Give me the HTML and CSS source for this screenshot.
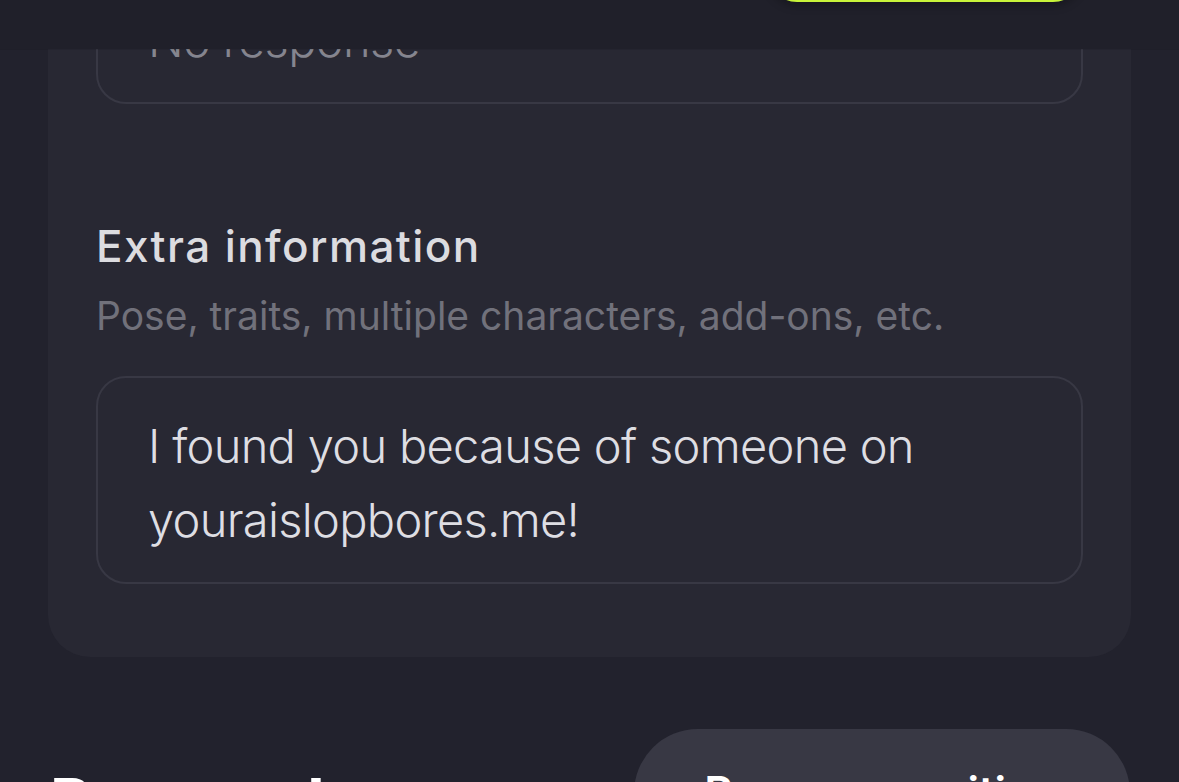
FILE: index.html
```html
<!DOCTYPE html>
<html lang="en">
<head>
<meta charset="utf-8">
<title>Commission request</title>
<link rel="stylesheet" href="styles.css">
</head>
<body>
<header class="topbar">
  <div class="topbar-pill"></div>
</header>
<main class="page">
  <section class="card">
    <div class="field">
      <div class="field-box field-box--empty">No response</div>
    </div>
    <div class="field field--labeled">
      <h3 class="field-title">Extra information</h3>
      <p class="field-hint">Pose, traits, multiple characters, add-ons, etc.</p>
      <div class="field-box">I found you because of someone on youraislopbores.me!</div>
    </div>
  </section>
  <div class="footer-row">
    <h2 class="section-title">Personal</h2>
    <button class="reserve-btn" type="button">Reserve position</button>
  </div>
</main>
</body>
</html>
```

FILE: styles.css
```css
html, body {
  margin: 0;
  padding: 0;
  background: #22222d;
  overflow: hidden;
  height: 782px;
}

body {
  font-family: Inter, "Noto Sans", sans-serif;
  color: #dcdce1;
}

.topbar {
  position: fixed;
  top: 0;
  left: 0;
  right: 0;
  height: 49px;
  background: #20202a;
  display: flex;
  justify-content: flex-end;
  padding-right: 96px;
  z-index: 10;
  box-shadow: 0 1px 0 rgba(0, 0, 0, 0.08);
}

.topbar-pill {
  width: 316px;
  height: 60px;
  margin-top: -58px;
  border-radius: 30px;
  background: #c8f43a;
  box-shadow: 0 4px 8px rgba(0, 0, 0, 0.25);
}

.page {
  padding: 0 48px;
}

.card {
  margin-top: -78px;
  background: #282833;
  border-radius: 42px;
  padding: 48px 48px 73px;
  display: flex;
  flex-direction: column;
}

.field-box {
  border: 2px solid #383844;
  border-radius: 30px;
  padding: 31px 50px 25px;
  font-size: 47px;
  font-weight: 300;
  letter-spacing: -0.7px;
  line-height: 74px;
  color: #dedee3;
}

.field-box--empty {
  color: #85858f;
}

.field--labeled {
  margin-top: 116px;
}

.field-title {
  margin: 0;
  font-size: 44px;
  font-weight: 500;
  letter-spacing: 1.4px;
  line-height: 52px;
  color: #dcdce0;
}

.field-hint {
  margin: 20px 0 36px;
  font-size: 39px;
  font-weight: 400;
  line-height: 48px;
  color: #71717b;
}

.footer-row {
  display: flex;
  justify-content: space-between;
  align-items: flex-start;
  margin-top: 72px;
  padding-left: 2px;
}

.section-title {
  margin: 41px 0 0;
  font-size: 64px;
  font-weight: 700;
  line-height: 1;
  color: #ffffff;
}

.reserve-btn {
  width: 496px;
  height: 130px;
  margin-right: 1px;
  border: none;
  border-radius: 64px;
  background: #383844;
  color: #ffffff;
  font-family: inherit;
  font-size: 44px;
  font-weight: 600;
  line-height: normal;
  padding: 36px 0 0;
  display: flex;
  justify-content: center;
  align-items: flex-start;
}
```
